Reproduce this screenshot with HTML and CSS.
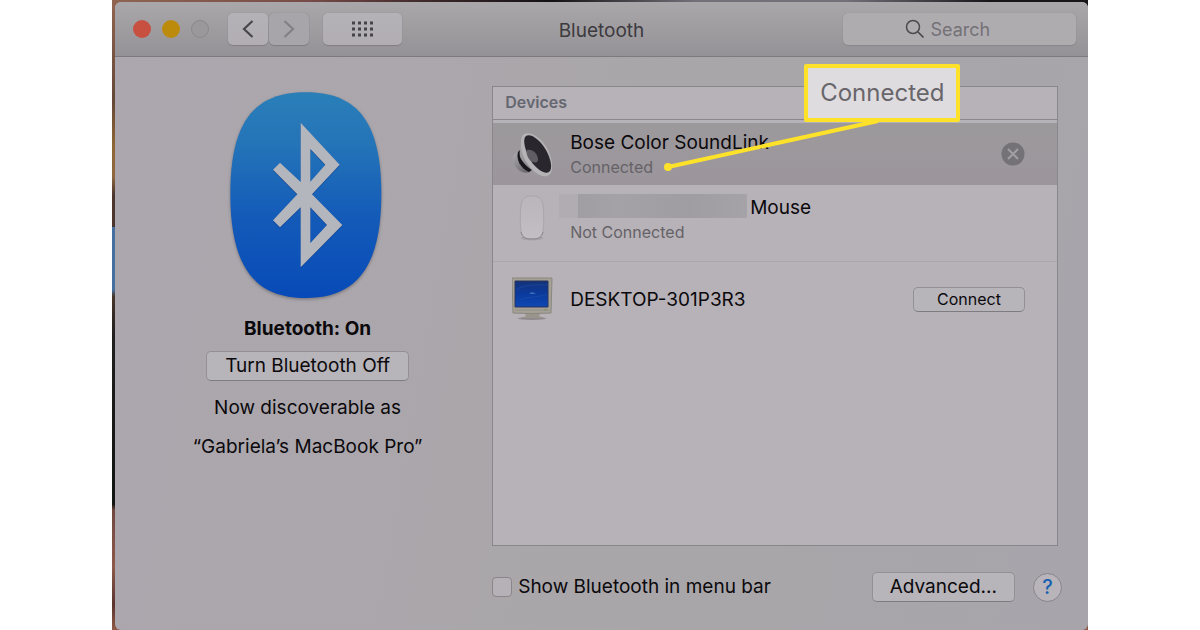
FILE: index.html
```html
<!DOCTYPE html>
<html lang="en">
<head>
<meta charset="utf-8">
<meta name="viewport" content="width=device-width, initial-scale=1">
<title>Bluetooth</title>
<link rel="stylesheet" href="styles.css">
</head>
<body>
<div class="desktop">
  <main class="window">
    <header class="titlebar">
      <div class="titlebar-left">
        <div class="lights">
          <button class="light light-close" aria-label="Close"></button>
          <button class="light light-minimize" aria-label="Minimize"></button>
          <button class="light light-zoom" aria-label="Zoom" disabled></button>
        </div>
        <div class="history">
          <button class="tool" aria-label="Back">
            <svg width="12" height="20" viewBox="0 0 12 20"><path d="M10.500 2 2 10l8.500 8" fill="none" stroke="#48464a" stroke-width="2.200"/></svg>
          </button>
          <button class="tool tool-dim" aria-label="Forward">
            <svg width="12" height="20" viewBox="0 0 12 20"><path d="m1.500 2 8.500 8-8.500 8" fill="none" stroke="#828084" stroke-width="2.200"/></svg>
          </button>
        </div>
        <button class="tool tool-wide" aria-label="Show all">
          <svg width="22" height="16" viewBox="0 0 22 16"><path d="M0 2h22M0 8h22M0 14h22" fill="none" stroke="#454347" stroke-width="3" stroke-dasharray="3 3"/></svg>
        </button>
      </div>
      <h1 class="title">Bluetooth</h1>
      <label class="search">
        <svg width="20" height="20" viewBox="0 0 20 20" aria-hidden="true"><circle cx="8" cy="8" r="6.500" fill="none" stroke="#4c4a4e" stroke-width="1.500"/><path d="m13 13 5.500 5.500" stroke="#4c4a4e" stroke-width="1.700"/></svg>
        <input class="search-input" type="search" placeholder="Search" aria-label="Search">
      </label>
    </header>

    <div class="content">
      <section class="status">
        <svg class="logo" width="158" height="217" viewBox="50 25 474 651" role="img" aria-label="Bluetooth logo">
          <defs>
            <linearGradient id="blue" x1="0" y1="0" x2="0" y2="1">
              <stop offset="0" stop-color="#2a7fb8"/>
              <stop offset=".25" stop-color="#2474b8"/>
              <stop offset=".6" stop-color="#145bb8"/>
              <stop offset="1" stop-color="#074ab8"/>
            </linearGradient>
          </defs>
          <path class="logo-body" fill="url(#blue)" d="M286 35C430 35 513 110 513 340S430 652 286 652 60 570 60 340 142 35 286 35Z"/>
          <path class="logo-rune" fill="#b4b6bd" fill-rule="evenodd" d="M271 126 388 252 305 341 396 433 271 560V380L209 440 188 419 261 341 188 267 209 246 271 304ZM300 205V303L345 252ZM300 380V487L350 433Z"/>
        </svg>
        <h2 class="status-title">Bluetooth: On</h2>
        <button class="button status-button">Turn Bluetooth Off</button>
        <p class="status-line">Now discoverable as</p>
        <p class="status-line">“Gabriela’s MacBook Pro”</p>
      </section>

      <section class="panel">
        <div class="devices">
          <h2 class="devices-head">Devices</h2>
          <ul class="device-list">
            <li class="device device-selected">
              <svg class="device-icon" width="42" height="46" viewBox="0 0 42 46" aria-hidden="true">
                <defs>
                  <linearGradient id="base" x1="0" y1="0" x2="1" y2="1"><stop offset="0" stop-color="#b0adb1"/><stop offset=".5" stop-color="#88858a"/><stop offset="1" stop-color="#615e63"/></linearGradient>
                  <linearGradient id="rim" x1="0" y1="0" x2="1" y2="1"><stop offset="0" stop-color="#a9a6aa"/><stop offset=".6" stop-color="#8d8a8f"/><stop offset="1" stop-color="#b5b1b6"/></linearGradient>
                </defs>
                <path d="M6 21C0 23-1 29 3 35c4 6 9 8 15 6z" fill="url(#base)"/>
                <path d="M6 21c-2 7 2 16 11 20l3-2L9 18z" fill="#17161a"/>
                <path d="M9 10C9 17 6 22 9 28c5 8 11 12 22 16z" fill="url(#rim)"/>
                <path d="M12 3C19 0 29 7 35 17c6 11 7 23 2 27-5 4-16-2-22-12C8 22 7 6 12 3z" fill="#b6b3b7"/>
                <path d="M14 5c5-3 14 4 20 14 5 9 7 19 3 22-4 3-13-3-18-11C13 20 10 8 14 5z" fill="#29272d"/>
                <path d="M15 19c6-1 11 4 11 10-1 4-6 3-9-1-2-3-3-6-2-9z" fill="#605e64"/>
              </svg>
              <div class="device-text">
                <span class="device-name">Bose Color SoundLink</span>
                <span class="device-state">Connected</span>
              </div>
              <button class="remove" aria-label="Remove Bose Color SoundLink">
                <svg width="24" height="24" viewBox="0 0 24 24"><circle cx="12" cy="12" r="11.500" fill="#757277"/><path d="m7 7 10 10M17 7 7 17" stroke="#a29ea3" stroke-width="2"/></svg>
              </button>
            </li>
            <li class="device device-mouse">
              <svg class="device-icon" width="42" height="48" viewBox="0 0 42 48" aria-hidden="true">
                <defs><linearGradient id="shell" x1="0" y1="0" x2="0" y2="1"><stop offset="0" stop-color="#b9b5ba"/><stop offset="1" stop-color="#c2bec3"/></linearGradient></defs>
                <ellipse cx="20" cy="43" rx="11" ry="2.500" fill="#a5a1a6"/>
                <path d="M20 1c8 0 10 3 11 9 1 8 1 18 0 26-1 6-4 8-11 8s-10-2-11-8c-1-8-1-18 0-26 1-6 3-9 11-9z" fill="url(#shell)" stroke="#a9a5aa"/>
                <path d="M9 37c1 5 4 7 11 7s10-2 11-7" fill="none" stroke="#8c888d"/>
              </svg>
              <div class="device-text">
                <span class="device-name"><span class="redacted"></span>Mouse</span>
                <span class="device-state">Not Connected</span>
              </div>
            </li>
            <li class="device device-desktop">
              <svg class="device-icon" width="42" height="44" viewBox="0 0 42 44" aria-hidden="true">
                <defs><linearGradient id="screen" x1="0" y1="0" x2="0" y2="1"><stop offset="0" stop-color="#153278"/><stop offset=".5" stop-color="#0a3a9e"/><stop offset="1" stop-color="#1048b4"/></linearGradient></defs>
                <ellipse cx="20" cy="41.500" rx="14" ry="1.500" fill="#8d898d"/>
                <path d="M12 35h17l-2 4 5 2H9l5-2z" fill="#99958c"/>
                <path d="M0 1h40l-1 35q-19 1-38 0z" fill="#a5a197" stroke="#8a877f"/>
                <path d="M3 4h33v26H3z" fill="url(#screen)" stroke="#2c3558"/>
                <path d="M4 13c8-6 20-5 32-5M8 23c7-4 17-2 27-6" fill="none" stroke="#2453a4" opacity=".5"/>
                <path d="m17 16 5-1-1 1 4 1-6 0z" fill="#3f74bd"/>
                <path d="M3 33h34" stroke="#949086"/>
                <path d="M32 33h3" stroke="#7c8f68"/>
              </svg>
              <div class="device-text">
                <span class="device-name">DESKTOP-301P3R3</span>
              </div>
              <button class="button connect">Connect</button>
            </li>
          </ul>
          <svg class="pointer" width="220" height="54" viewBox="0 0 220 54" aria-hidden="true"><path d="M8 48 218 2" stroke="#fde229" stroke-width="4"/><circle cx="8" cy="48" r="4" fill="#fde229"/></svg>
          <div class="callout">Connected</div>
        </div>
        <footer class="footer">
          <label class="menu-option"><input class="checkbox" type="checkbox">Show Bluetooth in menu bar</label>
          <button class="button advanced">Advanced...</button>
          <button class="help" aria-label="Help">?</button>
        </footer>
      </section>
    </div>
  </main>
</div>
</body>
</html>
```
FILE: styles.css
```css
* {
  box-sizing: border-box;
}

body {
  margin: 0;
  padding: 0 112px;
  background: #fff;
  color: #0b090c;
  font-family: Inter, Roboto, "Liberation Sans", sans-serif;
  font-size: 19px;
  line-height: 24px;
}

h1,
h2,
p,
ul {
  margin: 0;
  padding: 0;
}

button,
input {
  margin: 0;
  font: inherit;
  color: inherit;
}

button {
  display: flex;
  align-items: center;
  justify-content: center;
  padding: 0;
  border: 0;
}

.desktop {
  min-height: 100vh;
  display: flex;
  padding: 2px 0 0 3px;
  background:
    linear-gradient(90deg, #906451, #774c48 20%, #3a2728 33%, #141116 45%, #75717a 60%, #75717a 75%, #18151b 90%) top / 100% 10px no-repeat,
    linear-gradient(#906451, #654738 16%, #8c6733 23%, #8f6840 28%, #4b352d 31%, #4b352d 36%, #456f9e 36%, #456f9e 46%, #47362b 47%, #201f1d 53%, #111410 80%, #704940 81%, #8d594b 90%, #59342e 96%, #915b48);
}

.window {
  flex: 1;
  display: flex;
  flex-direction: column;
  border-radius: 6px;
  background: linear-gradient(100deg, #aca7ae, #a9a6a9 60%, #a7a5ab);
  overflow: hidden;
}

.titlebar {
  display: grid;
  grid-template-columns: 1fr auto 1fr;
  align-items: center;
  height: 55px;
  padding: 0 12px;
  border-bottom: 1px solid #7d7a7f;
  background: linear-gradient(#aaa7aa, #959297);
}

.titlebar-left {
  display: flex;
  align-items: center;
  padding-left: 6px;
}

.lights {
  display: flex;
  gap: 11px;
  margin-right: 19px;
}

.light {
  width: 18px;
  height: 18px;
  border-radius: 50%;
}

.light-close {
  background: #c75040;
}

.light-minimize {
  background: #bd8b0b;
}

.light-zoom {
  border: 1px solid #8b888b;
  background: #9b989b;
}

.history {
  display: flex;
  gap: 1px;
  margin-right: 14px;
}

.tool {
  width: 40px;
  height: 32px;
  border-radius: 5px;
  background: linear-gradient(#b5b2b7, #b1adb3);
  box-shadow: 0 1px 1px #807d82, 0 0 1px #807d82;
}

.tool-dim {
  background: #a8a5aa;
}

.tool-wide {
  width: 79px;
}

.title {
  padding-top: 4px;
  color: #3c3a3e;
  font-size: 19px;
  font-weight: 400;
}

.search {
  display: flex;
  align-items: center;
  justify-content: center;
  justify-self: end;
  gap: 6px;
  width: 233px;
  height: 32px;
  border-radius: 5px;
  background: #afacb0;
  box-shadow: 0 1px 1px #88858a, 0 0 1px #88858a;
}

.search-input {
  width: 84px;
  padding: 2px 0 0;
  border: 0;
  outline: 0;
  background: transparent;
  font-size: 18px;
  appearance: none;
}

.search-input::placeholder {
  color: #747177;
  opacity: 1;
}

.content {
  flex: 1;
  display: grid;
  grid-template-columns: 2fr 3fr;
  padding: 29px 30px 28px 0;
}

.status {
  display: flex;
  flex-direction: column;
  align-items: center;
  padding: 3px 0 0 8px;
  text-align: center;
}

.logo {
  margin-right: 4px;
}

.logo-body {
  filter: drop-shadow(0 4px 4px #77747a);
}

.logo-rune {
  filter: drop-shadow(0 2px 2px #123f85);
}

.status-title {
  margin-top: 11px;
  font-size: 19px;
  font-weight: 700;
}

.button {
  border: 1px solid #929095;
  border-bottom-color: #7e7b81;
  border-radius: 5px;
  background: #b7b4ba;
}

.status-button {
  height: 30px;
  margin: 10px 0 15px;
  padding: 0 18px;
}

.status-line + .status-line {
  margin-top: 15px;
}

.panel {
  display: flex;
  flex-direction: column;
}

.devices {
  position: relative;
  flex: 1;
  border: 1px solid #89868c;
  background: #b7b2b8;
}

.devices-head {
  height: 33px;
  padding-left: 12px;
  border-bottom: 1px solid #89868c;
  color: #646770;
  font-size: 16px;
  font-weight: 600;
  line-height: 31px;
}

.device-list {
  padding-top: 3px;
  list-style: none;
}

.device {
  display: flex;
  align-items: center;
  gap: 16px;
  padding: 0 32px 0 19px;
}

.device-selected {
  height: 62px;
  background: linear-gradient(#9c999c, #9c969c);
}

.device-mouse {
  height: 77px;
  padding-bottom: 8px;
  border-bottom: 1px solid #aaa6ab;
}

.device-desktop {
  height: 74px;
}

.device-icon {
  flex: none;
}

.device-text {
  flex: 1;
  display: flex;
  flex-direction: column;
  padding-top: 2px;
}

.device-name {
  display: flex;
  gap: 3px;
}

.device-state {
  color: #656267;
  font-size: 16px;
}

.redacted {
  width: 188px;
  height: 24px;
  margin: -2px 0 2px -11px;
  background: linear-gradient(90deg, #b0acb1 19px, #a19ea3 19px, #a4a2a6 60px, #a09da2 130px, #a6a3a8);
}

.remove {
  background: transparent;
}

.connect {
  width: 112px;
  height: 25px;
  font-size: 16px;
}

.pointer {
  position: absolute;
  left: 167px;
  top: 32px;
}

.callout {
  position: absolute;
  left: 311px;
  top: -23px;
  padding: 10px 12px;
  border: 4px solid #fde229;
  border-radius: 2px;
  background: #dfdce0;
  color: #68666a;
  font-size: 24px;
  line-height: 30px;
}

.footer {
  display: flex;
  align-items: center;
  margin: 26px -4px 0 0;
}

.menu-option {
  flex: 1;
  display: flex;
  align-items: center;
  gap: 6px;
}

.checkbox {
  width: 20px;
  height: 20px;
  border: 1px solid #89868b;
  border-radius: 4px;
  background: #b5b1b7;
  appearance: none;
}

.advanced {
  height: 30px;
  padding: 0 17px;
}

.help {
  width: 29px;
  height: 29px;
  margin-left: 18px;
  border: 1px solid #88858a;
  border-radius: 50%;
  background: #b8b4ba;
  color: #1760b2;
  font-size: 20px;
  font-weight: 500;
}
```
